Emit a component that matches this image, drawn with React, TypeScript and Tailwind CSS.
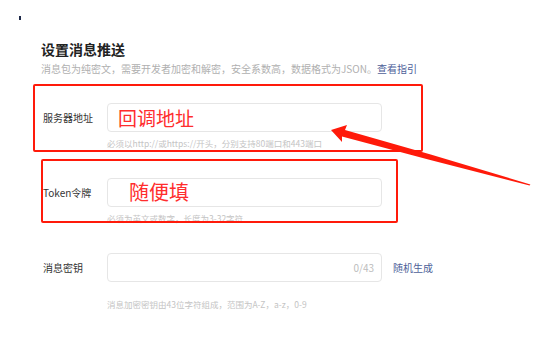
import React from "react";

const font = { fontFamily: '"Noto Sans CJK SC", "Noto Sans", sans-serif' };

export default function App() {
  return (
    <div className="relative w-[540px] h-[355px] bg-white overflow-hidden" style={font}>
      <div className="pt-[16px] pl-[19px]">
        <div className="w-[2px] h-[4px] bg-[#1e2a4a]" />
      </div>
      <div className="pl-[41px] mt-[19px]">
        <div className="text-[14px] leading-[20px] font-bold text-[#222]">设置消息推送</div>
        <div className="mt-[3px] text-[10px] leading-[14px] text-[#b0b0b0] whitespace-nowrap">
          消息包为纯密文，需要开发者加密和解密，安全系数高，数据格式为JSON。
          <span className="text-[#4e5f99]">查看指引</span>
        </div>
      </div>

      <div className="pl-[43px] mt-[27px] flex flex-col">
        {/* row 1 */}
        <div className="flex items-center">
          <div className="w-[64px] text-[10px] text-[#333]">服务器地址</div>
          <div className="w-[275px] h-[29px] border border-[#e6e6e6] rounded-[4px] flex items-center pl-[10px]">
            <span className="text-[19px] leading-none text-[#ff2d2d]">回调地址</span>
          </div>
        </div>
        <div className="pl-[64px] mt-[4px] text-[8.5px] leading-[14px] text-[#c4c4c4] whitespace-nowrap">
          必须以http://或https://开头，分别支持80端口和443端口
        </div>

        {/* row 2 */}
        <div className="flex items-center mt-[28px]">
          <div className="w-[64px] text-[10px] text-[#333]">Token令牌</div>
          <div className="w-[275px] h-[29px] border border-[#e6e6e6] rounded-[4px] flex items-start pt-[1px] pl-[21px]">
            <span className="text-[20px] leading-[24px] text-[#ff2d2d]">随便填</span>
          </div>
        </div>
        <div className="pl-[64px] mt-[4px] text-[8.5px] leading-[14px] text-[#c4c4c4] whitespace-nowrap">
          必须为英文或数字，长度为3-32字符
        </div>

        {/* row 3 */}
        <div className="flex items-center mt-[28px]">
          <div className="w-[64px] text-[10px] text-[#333]">消息密钥</div>
          <div className="w-[275px] h-[29px] border border-[#e6e6e6] rounded-[4px] flex items-center justify-end pr-[7px]">
            <span className="text-[10px] text-[#bdbdbd]">0/43</span>
          </div>
          <div className="ml-[11px] text-[10px] text-[#4e5f99]">随机生成</div>
        </div>
        <div className="pl-[64px] mt-[15px] text-[8.5px] leading-[14px] text-[#c4c4c4] whitespace-nowrap">
          消息加密密钥由43位字符组成，范围为A-Z，a-z，0-9
        </div>
      </div>

      {/* annotations */}
      <div className="absolute left-[33px] top-[84px] w-[390px] h-[68px] border-[2.5px] border-[#ff1a0a] rounded-[2px]" />
      <div className="absolute left-[41px] top-[159px] w-[357px] h-[64px] border-[2.5px] border-[#ff1a0a] rounded-[2px]" />
      <svg className="absolute left-0 top-0" width="540" height="355" viewBox="0 0 540 355">
        <polygon
          points="331,130 347,125 345,130 430.7,154.6 530.4,184.4 529.6,185.6 429.3,159.8 342,136.5 342,142"
          fill="#ff1a0a"
        />
      </svg>
    </div>
  );
}
